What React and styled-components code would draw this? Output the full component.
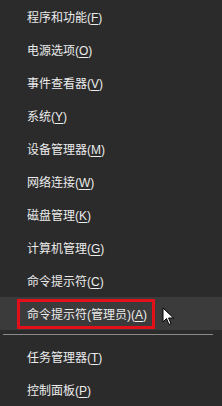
import React from 'react'
import styled, { createGlobalStyle } from 'styled-components'

const GlobalStyle = createGlobalStyle`
  html, body {
    margin: 0;
    padding: 0;
    background: #2b2b2b;
  }
`

const Menu = styled.div`
  position: relative;
  width: 222px;
  height: 406px;
  overflow: hidden;
  background: #2b2b2b;
  font-family: "Liberation Sans", "Noto Sans CJK SC", sans-serif;
  font-size: 12px;
  color: #ececec;
`

const Item = styled.div`
  display: flex;
  align-items: center;
  height: 33px;
  padding-left: 27px;
  background: ${p => (p.$active ? '#3b3b3b' : 'transparent')};
  u {
    text-decoration: underline;
    text-underline-offset: 2px;
  }
`

const Marked = styled.span`
  display: inline-flex;
  align-items: center;
  height: 24px;
  margin-left: -10px;
  padding: 0 5px 0 7px;
  border: 3px solid #e3101c;
`

const Separator = styled.div`
  height: 1px;
  margin: 4px 9px 5px 3px;
  background: #8a8a8a;
`

const Cursor = styled.svg`
  position: absolute;
  left: 162px;
  top: 307px;
`

const top = [
  ['程序和功能', 'F'],
  ['电源选项', 'O'],
  ['事件查看器', 'V'],
  ['系统', 'Y'],
  ['设备管理器', 'M'],
  ['网络连接', 'W'],
  ['磁盘管理', 'K'],
  ['计算机管理', 'G'],
  ['命令提示符', 'C'],
]

const bottom = [
  ['任务管理器', 'T'],
  ['控制面板', 'P'],
]

function Label({ text, hotkey }) {
  return (
    <span>
      {text}(<u>{hotkey}</u>)
    </span>
  )
}

export default function App() {
  return (
    <Menu>
      <GlobalStyle />
      {top.map(([t, k]) => (
        <Item key={k}>
          <Label text={t} hotkey={k} />
        </Item>
      ))}
      <Item $active>
        <Marked>
          <Label text="命令提示符(管理员)" hotkey="A" />
        </Marked>
      </Item>
      <Separator />
      {bottom.map(([t, k]) => (
        <Item key={k}>
          <Label text={t} hotkey={k} />
        </Item>
      ))}
      <Cursor width="13" height="19" viewBox="0 0 13 19">
        <path d="M1 1 L1 15 L4.5 11.5 L7 17.5 L9 16.6 L6.6 11 L11.5 11 Z" fill="#fff" stroke="#000" strokeWidth="1" strokeLinejoin="round" />
      </Cursor>
    </Menu>
  )
}
